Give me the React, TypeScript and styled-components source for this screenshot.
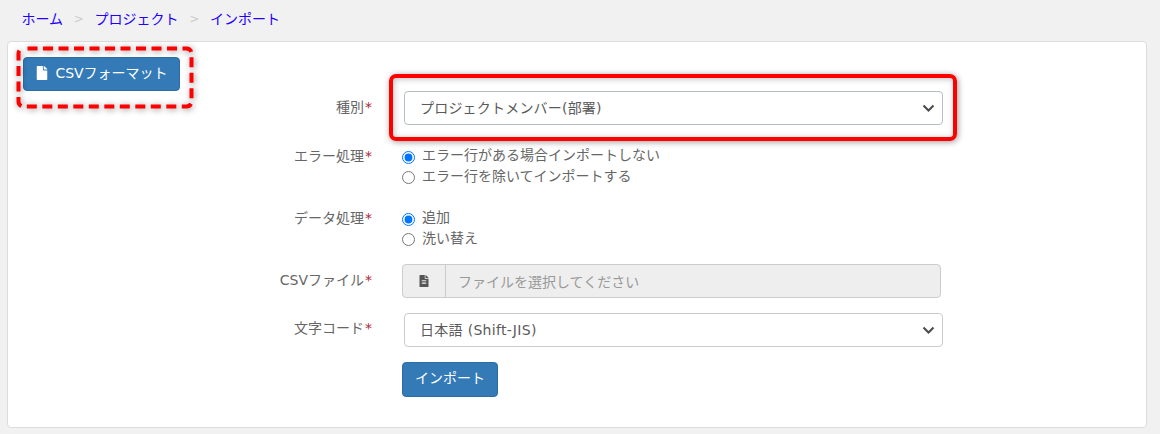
import React from "react";
import styled, { createGlobalStyle } from "styled-components";
import { FaFile, FaFileAlt } from "react-icons/fa";

const Global = createGlobalStyle`
  html, body { margin: 0; padding: 0; background: #f1f1f1; }
  body {
    font-family: "DejaVu Sans", "Noto Sans CJK JP", sans-serif;
    font-size: 14px;
    color: #666;
    overflow: hidden;
  }
`;

const Page = styled.div`
  position: relative;
  width: 1160px;
  height: 434px;
  padding: 0 13px 0 7px;
  box-sizing: border-box;
`;

const Breadcrumb = styled.nav`
  display: flex;
  align-items: center;
  height: 41px;
  padding: 0 0 4px 14.5px;
  box-sizing: border-box;
  line-height: 20px;
`;

const Crumb = styled.a`
  color: #2200ff;
  text-decoration: none;
`;

const Sep = styled.span`
  color: #ccc;
  width: 31.5px;
  text-align: center;
  font-size: 12px;
`;

const Card = styled.section`
  height: 387px;
  box-sizing: border-box;
  background: #fff;
  border: 1px solid #ddd;
  border-radius: 4px;
  padding: 15px;
`;

const Button = styled.button`
  display: inline-flex;
  align-items: center;
  justify-content: center;
  gap: 6px;
  height: ${(p) => p.$h}px;
  width: ${(p) => p.$w}px;
  padding: 0 0 3px;
  box-sizing: border-box;
  background: #337ab7;
  border: 1px solid #2e6da4;
  border-radius: 4px;
  color: #fff;
  font-family: inherit;
  font-size: 14px;
  line-height: 20px;
`;

const Form = styled.form`
  display: flex;
  flex-direction: column;
`;

const Row = styled.div`
  display: grid;
  grid-template-columns: 349px 1fr;
  column-gap: ${(p) => p.$gap ?? 32}px;
  align-items: start;
  margin-top: ${(p) => p.$top ?? 0}px;
`;

const Label = styled.label`
  text-align: right;
  line-height: 20px;
  padding-top: ${(p) => p.$top ?? 0}px;
`;

const Req = styled.span`
  color: #b0243a;
  margin-left: 1px;
`;

const SelectWrap = styled.div`
  position: relative;
  width: 539px;
  height: 34px;
`;

const Select = styled.select`
  display: block;
  width: 100%;
  height: 100%;
  appearance: none;
  box-sizing: border-box;
  background: #fff;
  border: 1px solid ${(p) => p.$border};
  border-radius: 4px;
  padding: 0 30px 0 15px;
  font-family: inherit;
  font-size: 14px;
  letter-spacing: ${(p) => p.$tracking}px;
  color: #5a5a5a;
`;

const Chevron = styled.svg`
  position: absolute;
  right: 8px;
  top: 13px;
  width: 13px;
  height: 9px;
  pointer-events: none;
`;

const RadioGroup = styled.div`
  display: flex;
  flex-direction: column;
`;

const RadioLine = styled.label`
  display: flex;
  align-items: center;
  height: 20.5px;
  gap: 7px;
  line-height: 20px;
`;

const Radio = styled.input`
  width: 13px;
  height: 13px;
  margin: 0;
  flex: none;
  position: relative;
  top: 2px;
`;

const FileGroup = styled.div`
  display: flex;
  width: 539px;
  height: 34px;
  box-sizing: border-box;
  background: #eee;
  border: 1px solid #ccc;
  border-radius: 4px;
`;

const FileAddon = styled.span`
  display: flex;
  align-items: center;
  justify-content: center;
  width: 42px;
  border-right: 1px solid #ccc;
  color: #555;
  font-size: 12px;
`;

const FilePlaceholder = styled.span`
  display: flex;
  align-items: center;
  padding: 0 0 1px 12px;
  color: #999;
`;

const SolidHighlight = styled.div`
  position: absolute;
  box-sizing: border-box;
  left: 389px;
  top: 74px;
  width: 568px;
  height: 67px;
  border: 4px solid #ff0000;
  border-radius: 7px;
  box-shadow: 1px 1px 6px rgba(0, 0, 0, 0.4), inset 1px 1px 6px rgba(0, 0, 0, 0.25);
  pointer-events: none;
`;

const DashedHighlight = styled.svg`
  position: absolute;
  left: 12px;
  top: 42px;
  width: 186px;
  height: 72px;
  pointer-events: none;
  filter: drop-shadow(1px 1px 3px rgba(0, 0, 0, 0.45));
`;

const ChevronIcon = () => (
  <Chevron viewBox="0 0 13 9">
    <path d="M1.5 1.5 L6.5 6.5 L11.5 1.5" fill="none" stroke="#4a4a4a" strokeWidth="2" />
  </Chevron>
);

export default function App() {
  return (
    <Page>
      <Global />
      <Breadcrumb>
        <Crumb href="#">ホーム</Crumb>
        <Sep>&gt;</Sep>
        <Crumb href="#">プロジェクト</Crumb>
        <Sep>&gt;</Sep>
        <Crumb href="#">インポート</Crumb>
      </Breadcrumb>
      <Card>
        <Button type="button" $w={157} $h={34}>
          <FaFile size={14} />
          CSVフォーマット
        </Button>
        <Form onSubmit={(e) => e.preventDefault()}>
          <Row $gap={32}>
            <Label $top={6}>種別<Req>*</Req></Label>
            <SelectWrap>
              <Select $border="#b4bdc9" $tracking={0.2} defaultValue="dept">
                <option value="dept">プロジェクトメンバー(部署)</option>
              </Select>
              <ChevronIcon />
            </SelectWrap>
          </Row>
          <Row $gap={30} $top={20}>
            <Label $top={1}>エラー処理<Req>*</Req></Label>
            <RadioGroup>
              <RadioLine><Radio type="radio" name="err" defaultChecked />エラー行がある場合インポートしない</RadioLine>
              <RadioLine><Radio type="radio" name="err" />エラー行を除いてインポートする</RadioLine>
            </RadioGroup>
          </Row>
          <Row $gap={30} $top={21}>
            <Label $top={1}>データ処理<Req>*</Req></Label>
            <RadioGroup>
              <RadioLine><Radio type="radio" name="data" defaultChecked />追加</RadioLine>
              <RadioLine><Radio type="radio" name="data" />洗い替え</RadioLine>
            </RadioGroup>
          </Row>
          <Row $gap={30} $top={16}>
            <Label $top={6}>CSVファイル<Req>*</Req></Label>
            <FileGroup>
              <FileAddon><FaFileAlt /></FileAddon>
              <FilePlaceholder>ファイルを選択してください</FilePlaceholder>
            </FileGroup>
          </Row>
          <Row $gap={32} $top={15}>
            <Label $top={5}>文字コード<Req>*</Req></Label>
            <SelectWrap>
              <Select $border="#ccc" $tracking={0.3} defaultValue="sjis">
                <option value="sjis">日本語 (Shift-JIS)</option>
              </Select>
              <ChevronIcon />
            </SelectWrap>
          </Row>
          <Row $gap={30} $top={15}>
            <span />
            <Button type="submit" $w={96} $h={35}>インポート</Button>
          </Row>
        </Form>
      </Card>
      <DashedHighlight viewBox="0 0 186 72">
        <rect x="6.5" y="6.5" width="173" height="58" rx="5" fill="none" stroke="#ff0000" strokeWidth="4" strokeDasharray="10 5.5" strokeDashoffset="-4" />
      </DashedHighlight>
      <SolidHighlight />
    </Page>
  );
}
